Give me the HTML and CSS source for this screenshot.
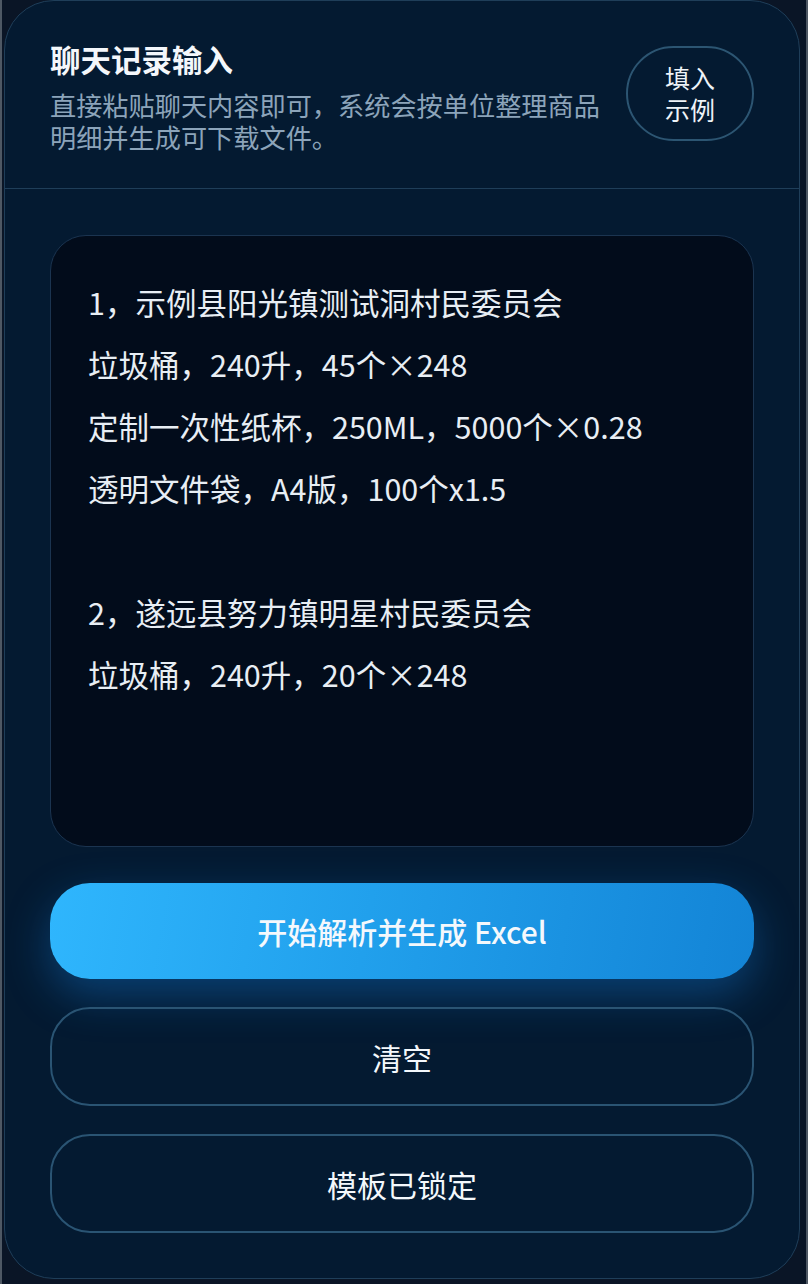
FILE: index.html
```html
<!DOCTYPE html>
<html lang="zh-CN">
<head>
<meta charset="utf-8">
<title>聊天记录输入</title>
<link rel="stylesheet" href="styles.css">
</head>
<body>
<div class="frame">
  <section class="card">
    <header class="card-head">
      <div class="head-text">
        <h1 class="title">聊天记录输入</h1>
        <p class="subtitle">直接粘贴聊天内容即可，系统会按单位整理商品明细并生成可下载文件。</p>
      </div>
      <button class="fill-btn" type="button"><span class="fill-line">填入</span><span class="fill-line">示例</span></button>
    </header>
    <div class="card-body">
      <div class="input-box">
        <div class="line">1，示例县阳光镇测试洞村民委员会</div>
        <div class="line">垃圾桶，240升，45个×248</div>
        <div class="line">定制一次性纸杯，250ML，5000个×0.28</div>
        <div class="line">透明文件袋，A4版，100个x1.5</div>
        <div class="line">&nbsp;</div>
        <div class="line">2，遂远县努力镇明星村民委员会</div>
        <div class="line">垃圾桶，240升，20个×248</div>
      </div>
      <button class="btn btn-primary" type="button">开始解析并生成 Excel</button>
      <button class="btn btn-outline" type="button">清空</button>
      <button class="btn btn-outline" type="button">模板已锁定</button>
    </div>
  </section>
</div>
</body>
</html>
```

FILE: styles.css
```css
* { box-sizing: border-box; }

html, body {
  margin: 0;
  padding: 0;
  background: #0a1526;
  height: 100%;
}

body {
  font-family: "Noto Sans CJK SC", "Noto Sans", sans-serif;
  color: #eef3f8;
  overflow: hidden;
}

.frame {
  border-left: 2px solid #4e5864;
  border-right: 2px solid #4e5864;
  min-height: 1284px;
  padding-left: 2px;
}

.card {
  width: 796px;
  height: 1279px;
  background: #041a31;
  border: 1.5px solid #1f3e59;
  border-radius: 50px;
  display: flex;
  flex-direction: column;
  overflow: hidden;
}

.card-head {
  display: flex;
  align-items: center;
  justify-content: space-between;
  gap: 24px;
  padding: 38px 45px 35px 45px;
  border-bottom: 1.5px solid #1f3e59;
}

.head-text { flex: 1; min-width: 0; }

.title {
  margin: 0;
  font-size: 30.5px;
  line-height: 40px;
  font-weight: 600;
  color: #f4f7fb;
}

.subtitle {
  margin: 10px 0 0;
  font-size: 26.2px;
  line-height: 32px;
  color: #8ca4ba;
}

.fill-btn {
  flex: none;
  width: 128px;
  height: 95px;
  border-radius: 48px;
  border: 2px solid #2c5572;
  background: transparent;
  color: #eef3f8;
  font-family: inherit;
  font-size: 25px;
  padding: 0;
  margin-top: -6px;
  display: flex;
  flex-direction: column;
  align-items: center;
  justify-content: center;
}

.fill-line {
  display: block;
  line-height: 32px;
  height: 32px;
}

.card-body {
  display: flex;
  flex-direction: column;
  padding: 46px 45px 46px;
}

.input-box {
  height: 612px;
  background: #020c1b;
  border: 1.5px solid #1b3450;
  border-radius: 36px;
  padding: 35px 37px;
  font-size: 30.5px;
  line-height: 62px;
  color: #e8eef4;
}

.btn {
  width: 100%;
  font-family: inherit;
  font-size: 30px;
  color: #f4f8fc;
  border-radius: 40px;
  padding: 0;
}

.btn-primary {
  height: 96px;
  margin-top: 36px;
  border: none;
  background: linear-gradient(100deg, #2fb6fd 0%, #21a0ec 45%, #1384d6 100%);
  box-shadow: 0 16px 44px rgba(18, 130, 225, 0.38);
  font-weight: 500;
}

.btn-outline {
  height: 99px;
  margin-top: 28px;
  background: transparent;
  border: 2px solid #2a5473;
}
```
